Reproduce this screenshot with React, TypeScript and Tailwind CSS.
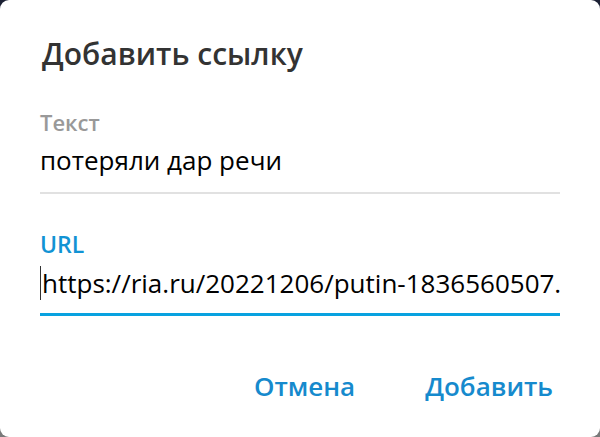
export default function App() {
  return (
    <div className="w-[600px] h-[437px] bg-linear-to-b from-[#1b2033] to-[#7a7a7a]">
      <div
        className="w-full h-full bg-white rounded-[9px] px-[40px] pt-[34px] flex flex-col"
        style={{ fontFamily: '"Open Sans", "Noto Sans", sans-serif' }}
      >
        <div className="text-[30px] leading-[40px] font-semibold text-[#333333] pl-[2px]">
          Добавить ссылку
        </div>

        <div className="mt-[33px] text-[22px] leading-[30px] font-semibold text-[#999999]">
          Текст
        </div>
        <div className="mt-[5px] text-[26px] leading-[36px] text-black">
          потеряли дар речи
        </div>
        <div className="mt-[14px] h-[2px] bg-[#e1e1e1]" />

        <div className="mt-[35px] text-[23px] leading-[30px] font-semibold text-[#1193d4]">
          URL
        </div>
        <div className="mt-[6px] h-[36px] flex items-center overflow-hidden whitespace-nowrap">
          <span className="w-px h-[34px] bg-[#333] shrink-0" />
          <span className="ml-[1px] text-[26px] leading-[36px] text-black">
            https://ria.ru/20221206/putin-1836560507.html
          </span>
        </div>
        <div className="mt-[12px] h-[3px] bg-[#08a2e0]" />

        <div className="mt-[54px] flex justify-end gap-[70px] pr-[7px] text-[26px] leading-[32px] font-semibold text-[#168acd]">
          <button>Отмена</button>
          <button>Добавить</button>
        </div>
      </div>
    </div>
  );
}
